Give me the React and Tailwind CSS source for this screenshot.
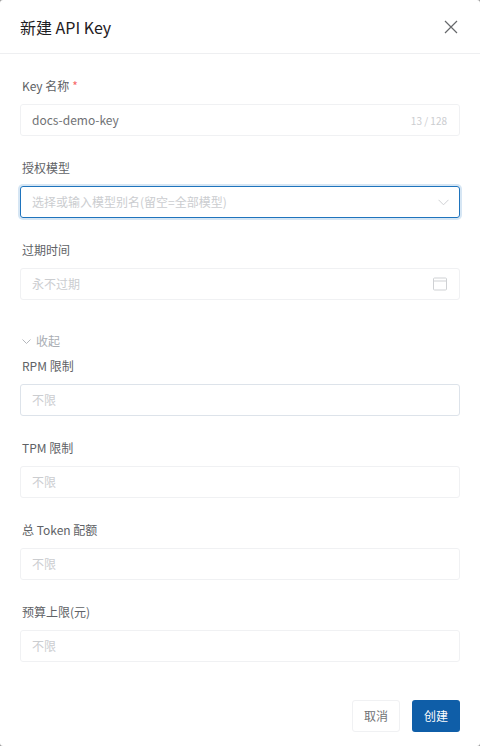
const font = { fontFamily: '"Noto Sans CJK SC", "Noto Sans", sans-serif' };

function Field({ label, required, children }) {
  return (
    <div className="mb-[21px]">
      <div className="h-[22px] mb-[7px] pl-[2px] flex items-center text-[12px] leading-[22px] text-[#606266]">
        {label}
        {required && <span className="ml-[3px] text-[#f76a6a]">*</span>}
      </div>
      {children}
    </div>
  );
}

function TextBox({ placeholder, value, hover, suffix }) {
  return (
    <div className={`h-8 flex items-center pl-[11px] pr-3 rounded-[3px] border bg-white ${hover ? 'border-[#dde3ea]' : 'border-[#f0f1f3]'}`}>
      <input
        readOnly
        value={value}
        placeholder={placeholder}
        className="flex-1 min-w-0 bg-transparent outline-none text-[12px] text-[#707275] placeholder:text-[#cbcdd0]"
      />
      {suffix}
    </div>
  );
}

export default function App() {
  return (
    <div className="min-h-screen bg-[#9a9a9a]" style={font}>
      <div className="h-[746px] bg-white rounded-[3px] flex flex-col overflow-hidden">
        {/* Header */}
        <div className="h-[54px] shrink-0 flex items-center justify-between pl-5 pr-[22px] border-b border-[#eeeff1]">
          <h1 className="text-[16px] text-[#1f2023]">新建 API Key</h1>
          <svg width="14" height="14" viewBox="0 0 14 14" fill="none" stroke="#66686b" strokeWidth="1.2">
            <path d="M1 1l12 12M13 1L1 13" />
          </svg>
        </div>

        {/* Form */}
        <div className="flex-1 px-5 pt-[21px]">
          <Field label="Key 名称" required>
            <TextBox
              value="docs-demo-key"
              suffix={<span className="text-[10px] text-[#cbcdd0]">13 / 128</span>}
            />
          </Field>

          <Field label="授权模型">
            <div className="h-8 flex items-center pl-[11px] pr-[10px] rounded-[3px] border border-[#1f74bd] shadow-[0_0_0_2px_#d6e6f4]">
              <input
                readOnly
                placeholder="选择或输入模型别名(留空=全部模型)"
                className="flex-1 min-w-0 bg-transparent outline-none text-[12px] placeholder:text-[#cbcdd0]"
              />
              <svg width="11" height="7" viewBox="0 0 11 7" fill="none" stroke="#cfd1d4" strokeWidth="1">
                <path d="M0.5 0.8l5 5 5-5" />
              </svg>
            </div>
          </Field>

          <Field label="过期时间">
            <TextBox
              placeholder="永不过期"
              suffix={
                <svg width="14" height="14" viewBox="0 0 14 14" fill="none" stroke="#cfd1d4" strokeWidth="1">
                  <rect x="0.5" y="1" width="13" height="12" rx="1" />
                  <path d="M0.5 4h13" />
                </svg>
              }
            />
          </Field>

          <div className="mt-[30px] mb-[3px] h-[22px] pl-[2px] flex items-center gap-[5px] text-[12px] text-[#a9adb3]">
            <svg width="9" height="5" viewBox="0 0 9 5" fill="none" stroke="#b4b7bc" strokeWidth="1">
              <path d="M0.5 0.5l4 4 4-4" />
            </svg>
            收起
          </div>

          <Field label="RPM 限制">
            <TextBox placeholder="不限" hover />
          </Field>
          <Field label="TPM 限制">
            <TextBox placeholder="不限" />
          </Field>
          <Field label="总 Token 配额">
            <TextBox placeholder="不限" />
          </Field>
          <Field label="预算上限(元)">
            <TextBox placeholder="不限" />
          </Field>
        </div>

        {/* Footer */}
        <div className="shrink-0 flex justify-end gap-3 px-5 pb-[14px]">
          <button className="w-12 h-8 rounded-[3px] border border-[#f0f1f3] bg-white text-[12px] text-[#707275]">取消</button>
          <button className="w-12 h-8 rounded-[3px] bg-[#0f5ea8] text-[12px] text-white">创建</button>
        </div>
      </div>
    </div>
  );
}
